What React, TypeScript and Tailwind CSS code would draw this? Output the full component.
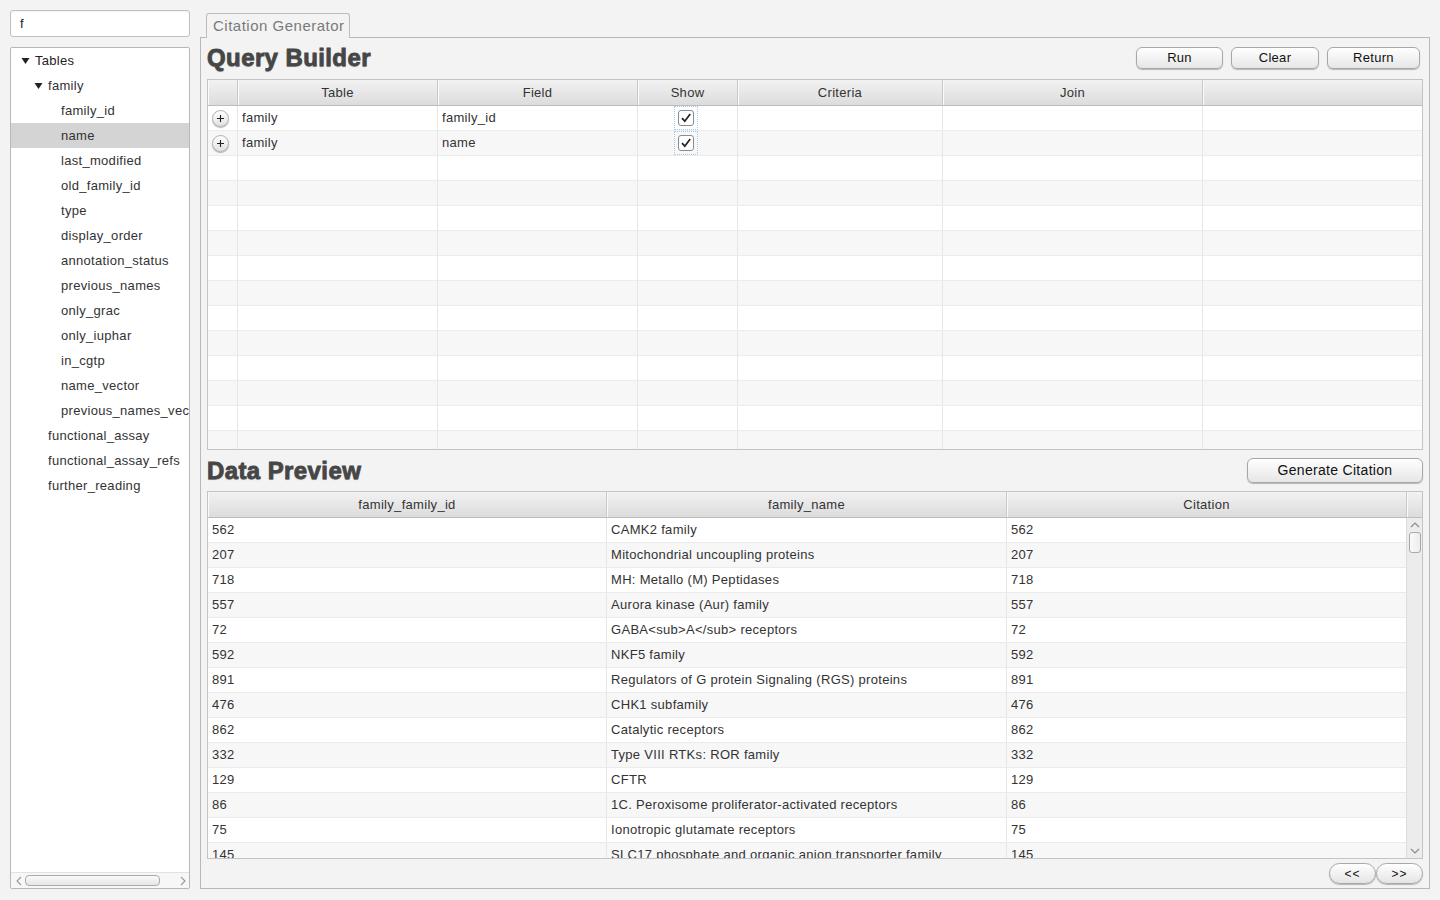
import React from "react";

const font = { fontFamily: '"Liberation Sans", Arial, sans-serif', letterSpacing: "0.3px" };

type TreeItem = { label: string; level: number; expanded?: boolean; selected?: boolean };

const tree: TreeItem[] = [
  { label: "Tables", level: 0, expanded: true },
  { label: "family", level: 1, expanded: true },
  { label: "family_id", level: 2 },
  { label: "name", level: 2, selected: true },
  { label: "last_modified", level: 2 },
  { label: "old_family_id", level: 2 },
  { label: "type", level: 2 },
  { label: "display_order", level: 2 },
  { label: "annotation_status", level: 2 },
  { label: "previous_names", level: 2 },
  { label: "only_grac", level: 2 },
  { label: "only_iuphar", level: 2 },
  { label: "in_cgtp", level: 2 },
  { label: "name_vector", level: 2 },
  { label: "previous_names_vector", level: 2 },
  { label: "functional_assay", level: 1 },
  { label: "functional_assay_refs", level: 1 },
  { label: "further_reading", level: 1 },
];

const data: [string, string][] = [
  ["562", "CAMK2 family"],
  ["207", "Mitochondrial uncoupling proteins"],
  ["718", "MH: Metallo (M) Peptidases"],
  ["557", "Aurora kinase (Aur) family"],
  ["72", "GABA<sub>A</sub> receptors"],
  ["592", "NKF5 family"],
  ["891", "Regulators of G protein Signaling (RGS) proteins"],
  ["476", "CHK1 subfamily"],
  ["862", "Catalytic receptors"],
  ["332", "Type VIII RTKs: ROR family"],
  ["129", "CFTR"],
  ["86", "1C. Peroxisome proliferator-activated receptors"],
  ["75", "Ionotropic glutamate receptors"],
  ["145", "SLC17 phosphate and organic anion transporter family"],
];

function Triangle() {
  return (
    <svg width="9" height="8" viewBox="0 0 9 8" className="shrink-0">
      <path d="M0.5 1 L8.5 1 L4.5 7 Z" fill="#222" />
    </svg>
  );
}

function Btn({ label, w }: { label: string; w: string }) {
  return (
    <div
      className={`${w} h-[22px] flex items-center justify-center rounded-[6px] border border-[#a8a8a8] bg-gradient-to-b from-[#ffffff] to-[#e6e6e6] shadow-[0_1px_1px_rgba(0,0,0,0.25)] text-[13px] text-[#111]`}
    >
      {label}
    </div>
  );
}

function PillBtn({ label }: { label: string }) {
  return (
    <div className="w-[47px] h-[21px] flex items-center justify-center rounded-full border border-[#a8a8a8] bg-gradient-to-b from-[#ffffff] to-[#e4e4e4] shadow-[0_1px_1px_rgba(0,0,0,0.25)] text-[12px] text-[#111] tracking-[1px]">
      {label}
    </div>
  );
}

function PlusBtn() {
  return (
    <div className="w-[17px] h-[17px] rounded-full border border-[#b0b0b0] bg-gradient-to-b from-[#ffffff] to-[#e2e2e2] shadow-[0_1px_1px_rgba(0,0,0,0.3)] flex items-center justify-center">
      <svg width="9" height="9" viewBox="0 0 9 9">
        <path d="M4.5 1 V8 M1 4.5 H8" stroke="#222" strokeWidth="1.1" />
      </svg>
    </div>
  );
}

function Check() {
  return (
    <div className="w-[24px] h-[24px] border border-dotted border-[#a9cde6] flex items-center justify-center">
      <div className="w-[16px] h-[16px] rounded-[3px] border border-[#8c8c8c] bg-white flex items-center justify-center">
        <svg width="12" height="12" viewBox="0 0 12 12">
          <path d="M2 6.2 L4.8 9.2 L10.2 2" stroke="#222" strokeWidth="1.7" fill="none" />
        </svg>
      </div>
    </div>
  );
}

const Heading = ({ children }: { children: React.ReactNode }) => (
  <div
    className="text-[24px] font-bold text-[#464646] leading-none"
    style={{
      WebkitTextStroke: "0.8px #464646",
      textShadow: "0 1px 1px rgba(0,0,0,0.25)",
      letterSpacing: "0.4px",
    }}
  >
    {children}
  </div>
);

const qCols = ["w-[30px]", "w-[200px]", "w-[200px]", "w-[100px]", "w-[205px]", "w-[260px]", "flex-1"];
const qHeaders = ["", "Table", "Field", "Show", "Criteria", "Join", ""];

function QueryTable() {
  const rows = Array.from({ length: 14 });
  const filled: [string, string][] = [
    ["family", "family_id"],
    ["family", "name"],
  ];
  return (
    <div className="h-[371px] border border-[#c4c4c4] bg-white flex flex-col overflow-hidden">
      <div className="h-[26px] shrink-0 flex bg-gradient-to-b from-[#f2f2f2] to-[#dcdcdc] border-b border-[#bdbdbd]">
        {qHeaders.map((h, i) => (
          <div
            key={i}
            className={`${qCols[i]} ${i < 6 ? "border-r border-r-[#c8c8c8]" : ""} shadow-[inset_1px_0_0_#fafafa] flex items-center justify-center text-[13px] text-[#333]`}
          >
            {h}
          </div>
        ))}
      </div>
      <div className="flex-1 overflow-hidden">
        {rows.map((_, r) => {
          const f = filled[r];
          return (
            <div
              key={r}
              className={`h-[25px] flex border-b border-[#ececec] ${r % 2 === 0 ? "bg-white" : "bg-[#f7f7f7]"}`}
            >
              {qCols.map((c, i) => (
                <div
                  key={i}
                  className={`${c} ${i < 6 ? "border-r border-[#e6e6e6]" : ""} flex items-center text-[13px] text-[#333] overflow-hidden whitespace-nowrap`}
                >
                  {f && i === 0 && (
                    <div className="w-full flex justify-start pl-[4px]">
                      <PlusBtn />
                    </div>
                  )}
                  {f && i === 1 && <span className="pl-[4px]">{f[0]}</span>}
                  {f && i === 2 && <span className="pl-[4px]">{f[1]}</span>}
                  {f && i === 3 && (
                    <div className="w-full flex justify-center pr-[3px]">
                      <Check />
                    </div>
                  )}
                </div>
              ))}
            </div>
          );
        })}
      </div>
    </div>
  );
}

function DataTable() {
  const cols = ["w-[399px]", "w-[400px]", "w-[400px]"];
  const heads = ["family_family_id", "family_name", "Citation"];
  return (
    <div className="h-[368px] border border-[#c4c4c4] bg-white flex flex-col overflow-hidden">
      <div className="h-[26px] shrink-0 flex bg-gradient-to-b from-[#f2f2f2] to-[#dcdcdc] border-b border-[#bdbdbd]">
        {heads.map((h, i) => (
          <div
            key={i}
            className={`${cols[i]} border-r border-r-[#c8c8c8] shadow-[inset_1px_0_0_#fafafa] flex items-center justify-center text-[13px] text-[#333]`}
          >
            {h}
          </div>
        ))}
        <div className="flex-1 shadow-[inset_1px_0_0_#fafafa]" />
      </div>
      <div className="flex-1 flex overflow-hidden">
        <div className="flex-1 overflow-hidden">
          {data.map((d, r) => (
            <div
              key={r}
              className={`h-[25px] flex border-b border-[#ebebeb] ${r % 2 === 0 ? "bg-white" : "bg-[#f7f7f7]"}`}
            >
              <div className={`${cols[0]} border-r border-[#e6e6e6] flex items-center pl-[4px] text-[13px] text-[#333]`}>{d[0]}</div>
              <div className={`${cols[1]} border-r border-[#e6e6e6] flex items-center pl-[4px] text-[13px] text-[#333] whitespace-nowrap overflow-hidden`}>{d[1]}</div>
              <div className={`flex-1 flex items-center pl-[4px] text-[13px] text-[#333]`}>{d[0]}</div>
            </div>
          ))}
        </div>
        <div className="w-[16px] shrink-0 bg-[#ececec] border-l border-[#dcdcdc] flex flex-col items-center">
          <svg width="10" height="7" viewBox="0 0 10 7" className="mt-[3px]">
            <path d="M1 6 L5 2 L9 6" stroke="#8a8a8a" strokeWidth="1.2" fill="none" />
          </svg>
          <div className="mt-[4px] w-[12px] h-[21px] rounded-[3px] border border-[#a9a9a9] bg-gradient-to-r from-[#fafafa] to-[#ececec]" />
          <div className="flex-1" />
          <svg width="10" height="7" viewBox="0 0 10 7" className="mb-[3px]">
            <path d="M1 1 L5 5 L9 1" stroke="#8a8a8a" strokeWidth="1.2" fill="none" />
          </svg>
        </div>
      </div>
    </div>
  );
}

export default function App() {
  return (
    <div className="w-[1440px] h-[900px] bg-[#f3f3f3] flex overflow-hidden" style={font}>
      {/* Left column */}
      <div className="w-[180px] ml-[10px] pt-[10px] flex flex-col shrink-0">
        <div className="h-[27px] bg-white border border-[#c0c0c0] rounded-[3px] flex items-center pl-[9px] text-[13px] text-[#222] shadow-[inset_0_1px_1px_rgba(0,0,0,0.05)]">
          f
        </div>
        <div className="mt-[10px] h-[842px] bg-white border border-[#b8b8b8] rounded-[2px] flex flex-col overflow-hidden">
          <div className="flex-1 overflow-hidden">
            {tree.map((t, i) => {
              const textX = 24 + 13 * t.level;
              return (
                <div
                  key={i}
                  className={`h-[25px] relative flex items-center whitespace-nowrap text-[13px] ${t.selected ? "bg-[#d4d4d4]" : ""} ${t.level === 0 ? "text-[#222]" : "text-[#333]"}`}
                >
                  {t.expanded && (
                    <span className="absolute top-[9px]" style={{ left: textX - 14 }}>
                      <Triangle />
                    </span>
                  )}
                  <span style={{ paddingLeft: textX }}>{t.label}</span>
                </div>
              );
            })}
          </div>
          <div className="h-[16px] shrink-0 border-t border-[#e2e2e2] bg-[#f7f7f7] flex items-center">
            <svg width="8" height="10" viewBox="0 0 8 10" className="ml-[4px]">
              <path d="M6 1 L2 5 L6 9" stroke="#9a9a9a" strokeWidth="1.1" fill="none" />
            </svg>
            <div className="ml-[2px] w-[135px] h-[11px] rounded-[4px] border border-[#aaaaaa] bg-gradient-to-b from-[#fafafa] to-[#e6e6e6]" />
            <div className="flex-1" />
            <svg width="8" height="10" viewBox="0 0 8 10" className="mr-[2px]">
              <path d="M2 1 L6 5 L2 9" stroke="#9a9a9a" strokeWidth="1.1" fill="none" />
            </svg>
          </div>
        </div>
      </div>

      {/* Right column */}
      <div className="ml-[10px] w-[1230px] pt-[12px] flex flex-col shrink-0">
        <div className="flex">
          <div className="ml-[6px] w-[144px] h-[25px] border border-b-0 border-[#bdbdbd] rounded-t-[3px] bg-[#f3f3f3] flex items-center pl-[6px] text-[15px] text-[#7a7a7a] tracking-[0.5px] relative top-[1px]">
            Citation Generator
          </div>
        </div>
        <div className="h-[852px] border border-[#b8b8b8] bg-[#f3f3f3] flex flex-col px-[6px]">
          <div className="h-[41px] shrink-0 flex items-center justify-between pb-[1px]">
            <Heading>Query Builder</Heading>
            <div className="flex gap-[8px] pr-[3px]">
              <Btn label="Run" w="w-[87px]" />
              <Btn label="Clear" w="w-[88px]" />
              <Btn label="Return" w="w-[93px]" />
            </div>
          </div>
          <QueryTable />
          <div className="h-[41px] shrink-0 flex items-center justify-between">
            <Heading>Data Preview</Heading>
            <Btn label="Generate Citation" w="w-[176px] !h-[25px] text-[14px]" />
          </div>
          <DataTable />
          <div className="h-[28px] flex items-center justify-end pt-[1px]">
            <PillBtn label="<<" />
            <PillBtn label=">>" />
          </div>
        </div>
      </div>
    </div>
  );
}
